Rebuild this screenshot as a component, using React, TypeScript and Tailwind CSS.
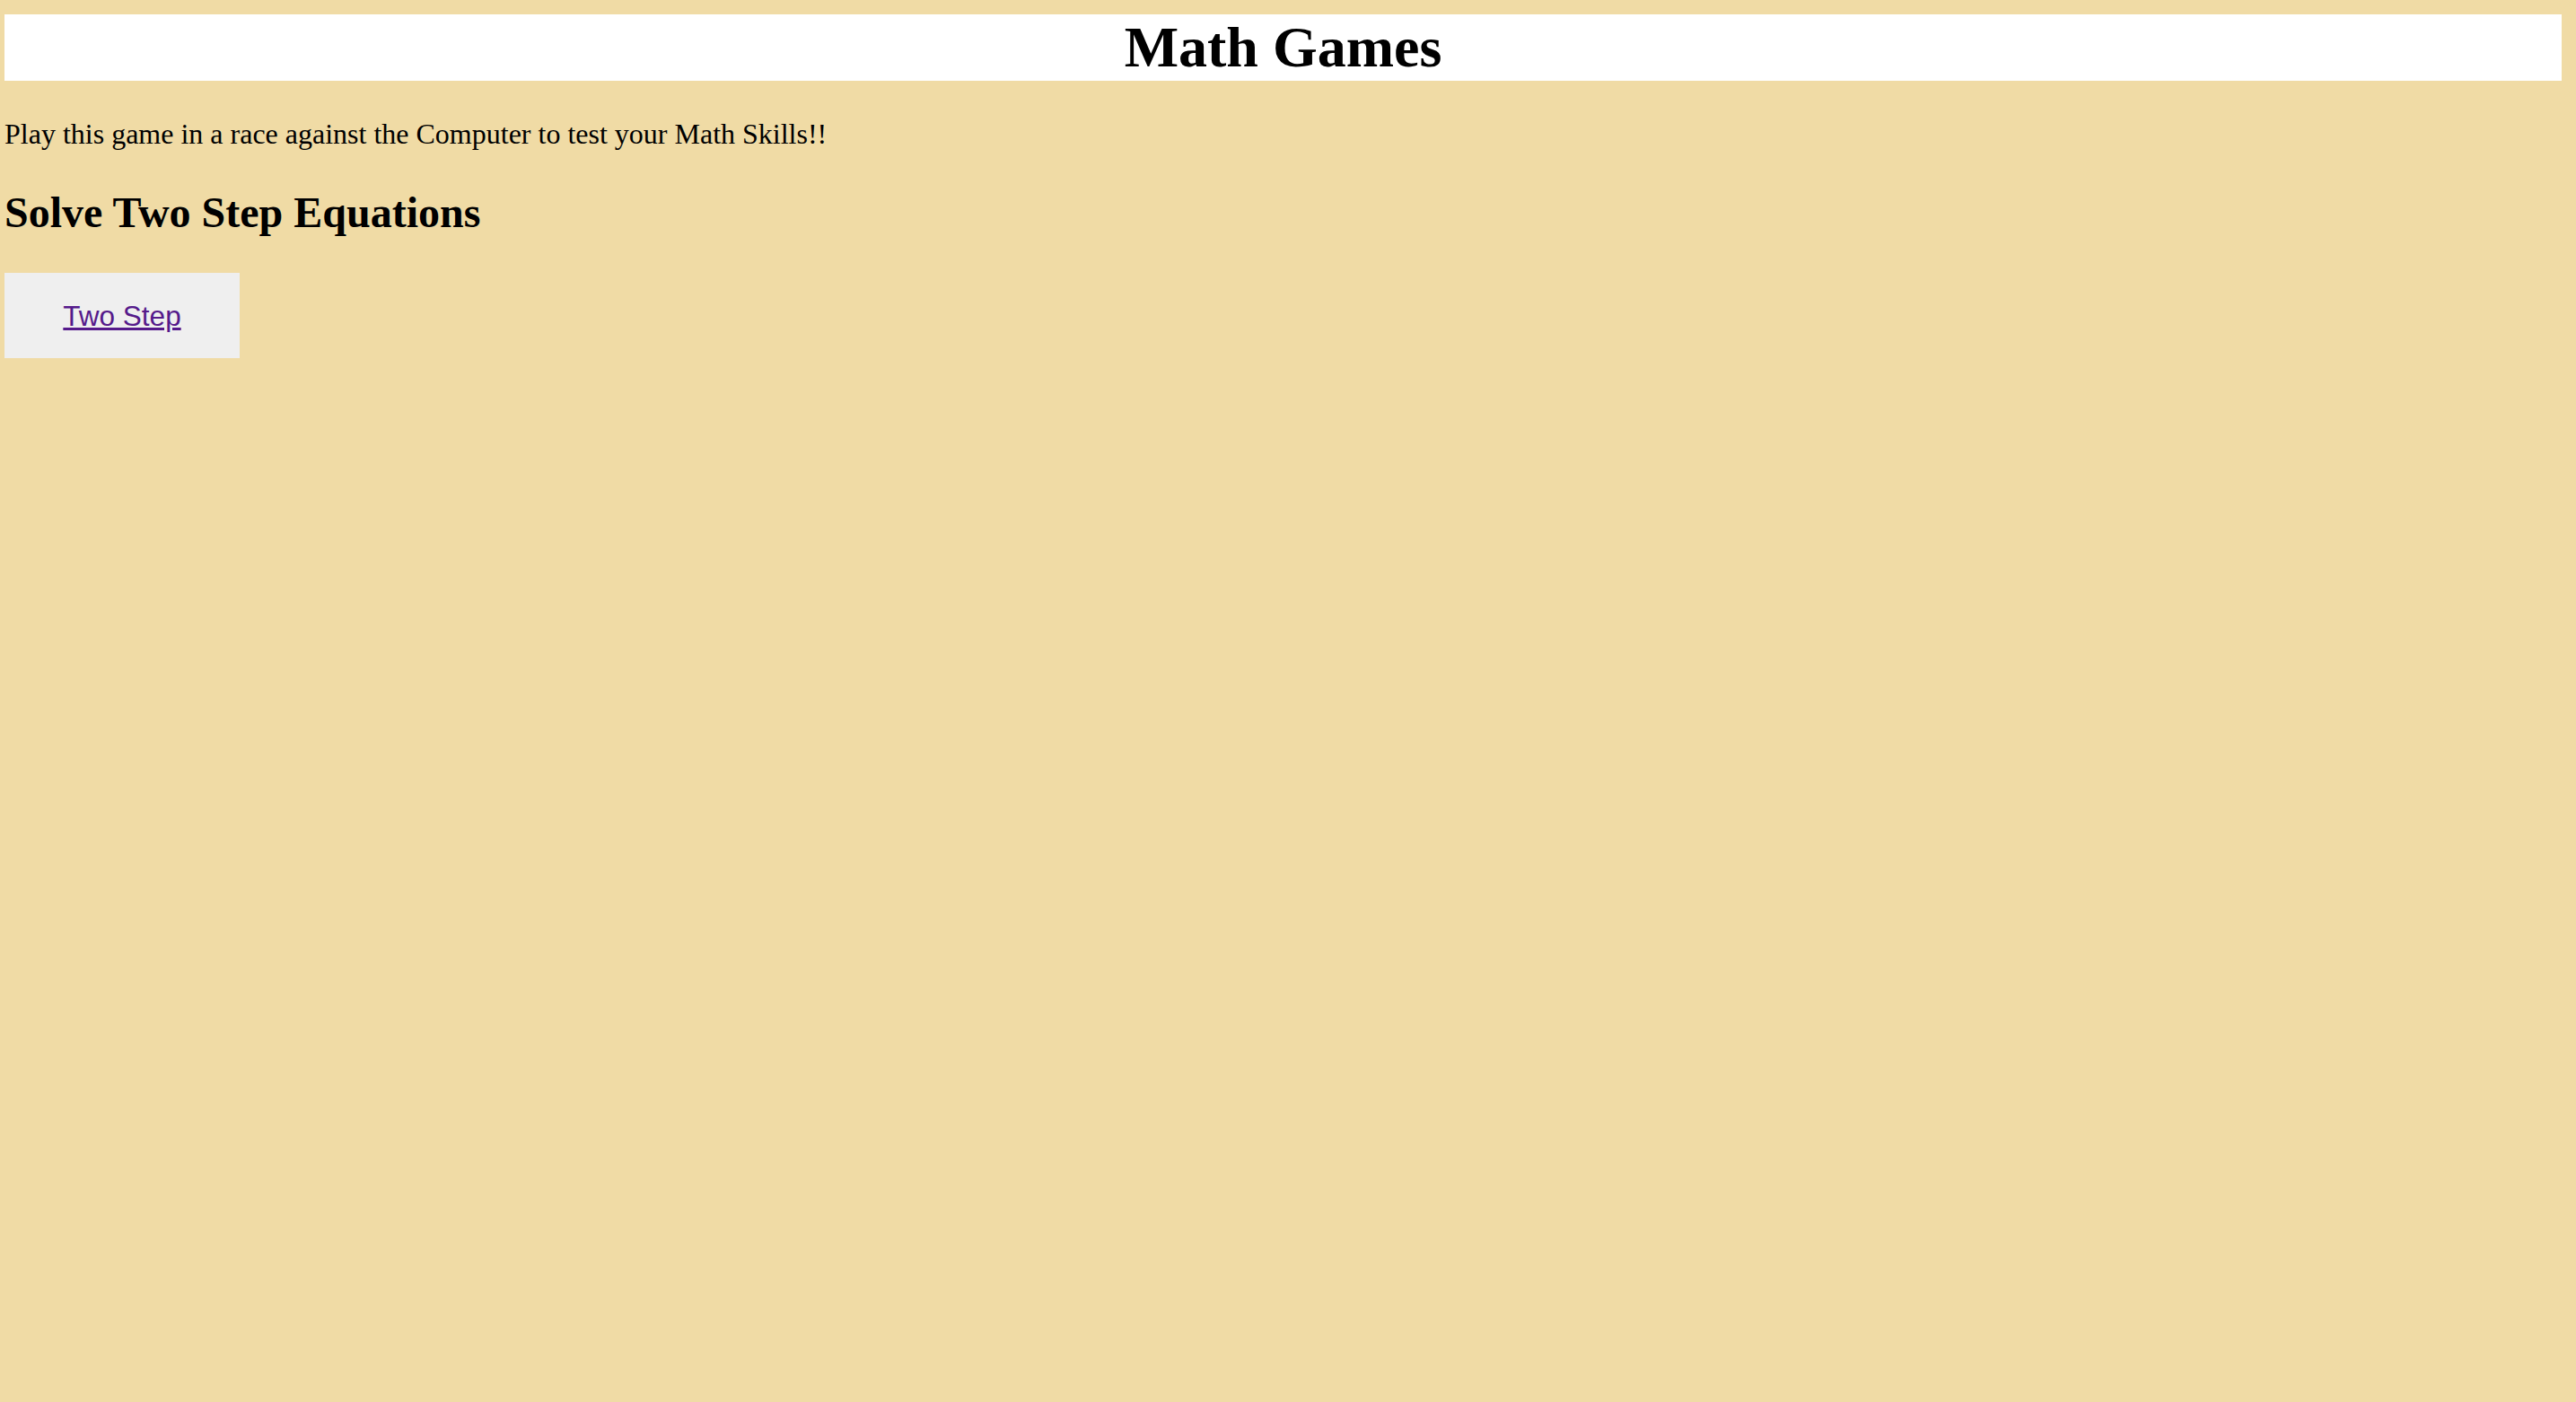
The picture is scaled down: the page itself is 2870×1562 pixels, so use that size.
export default function App() {
  return (
    <div className="min-h-screen w-full bg-[#f0dba5] pt-[16px] text-black">
      {/* Title bar */}
      <header className="ml-[5px] mr-[16px] h-[74px] bg-white">
        <h1 className="text-center font-['Liberation_Serif',serif] text-[64px] font-bold leading-[74px]">
          Math Games
        </h1>
      </header>

      <div className="pl-[5px]">
        <p className="mt-[41px] font-['Liberation_Serif',serif] text-[32px] leading-[36px]">
          Play this game in a race against the Computer to test your Math Skills!!
        </p>

        <h2 className="mt-[42px] font-['Liberation_Serif',serif] text-[48px] font-bold leading-[56px]">
          Solve Two Step Equations
        </h2>

        <div className="mt-[39px] flex h-[95px] w-[262px] items-center justify-center bg-[#efefef]">
          <a
            href="#"
            className="font-['Liberation_Sans',Arial,sans-serif] text-[31.5px] leading-[36px] text-[#551a8b] underline"
          >
            Two Step
          </a>
        </div>
      </div>
    </div>
  );
}
